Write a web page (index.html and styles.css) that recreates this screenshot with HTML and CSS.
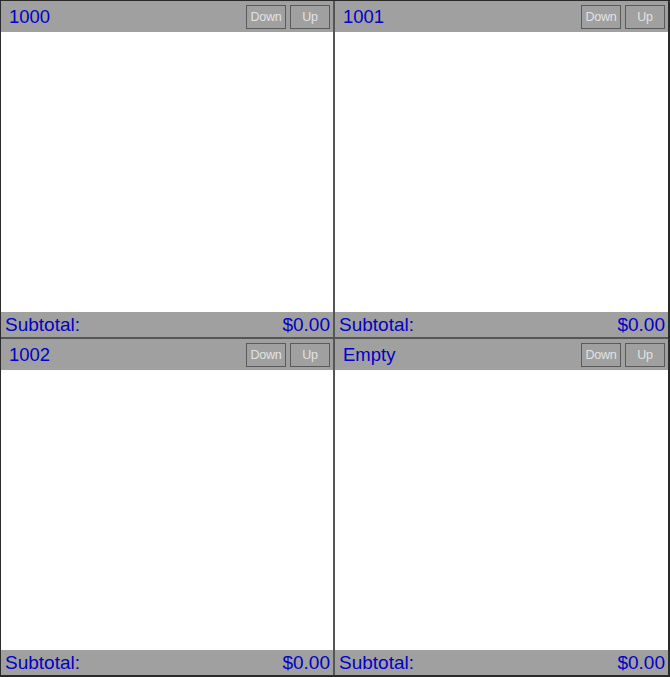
FILE: index.html
```html
<!DOCTYPE html>
<html>
<head>
<meta charset="utf-8">
<link rel="stylesheet" href="styles.css">
</head>
<body>
<div class="board">
  <div class="ticket">
    <div class="head"><span class="title">1000</span><div class="btns"><button class="btn">Down</button><button class="btn">Up</button></div></div>
    <div class="body"></div>
    <div class="foot"><span>Subtotal:</span><span>$0.00</span></div>
  </div>
  <div class="ticket">
    <div class="head"><span class="title">1001</span><div class="btns"><button class="btn">Down</button><button class="btn">Up</button></div></div>
    <div class="body"></div>
    <div class="foot"><span>Subtotal:</span><span>$0.00</span></div>
  </div>
  <div class="ticket">
    <div class="head"><span class="title">1002</span><div class="btns"><button class="btn">Down</button><button class="btn">Up</button></div></div>
    <div class="body"></div>
    <div class="foot"><span>Subtotal:</span><span>$0.00</span></div>
  </div>
  <div class="ticket">
    <div class="head"><span class="title">Empty</span><div class="btns"><button class="btn">Down</button><button class="btn">Up</button></div></div>
    <div class="body"></div>
    <div class="foot"><span>Subtotal:</span><span>$0.00</span></div>
  </div>
</div>
</body>
</html>
```
FILE: styles.css
```css
html, body {
  margin: 0;
  padding: 0;
  background: #ffffff;
}
body {
  font-family: "Liberation Sans", Arial, sans-serif;
  width: 670px;
  height: 677px;
}
.board {
  box-sizing: border-box;
  width: 670px;
  height: 677px;
  display: grid;
  grid-template-columns: 332px 333px;
  grid-template-rows: 336px 336px;
  column-gap: 2px;
  row-gap: 2px;
  background: #555555;
  border-style: solid;
  border-color: #2a2a2a;
  border-width: 1px 2px 2px 1px;
}
.ticket {
  display: flex;
  flex-direction: column;
  background: #ffffff;
  min-height: 0;
}
.head {
  height: 31px;
  flex: none;
  background: #a0a0a0;
  display: flex;
  align-items: center;
  justify-content: space-between;
  padding: 0 3px 0 8px;
}
.title {
  color: #0000c8;
  font-size: 18.5px;
}
.btns {
  display: flex;
  gap: 4px;
  padding-top: 1px;
}
.btn {
  box-sizing: border-box;
  width: 40px;
  height: 24px;
  margin: 0;
  padding: 0;
  background: #a0a0a0;
  border: 1.5px solid #5a5a5a;
  color: #e2e2e2;
  font-family: "Liberation Sans", Arial, sans-serif;
  font-size: 12.5px;
  letter-spacing: -0.3px;
}
.body {
  flex: 1;
}
.foot {
  height: 25px;
  flex: none;
  background: #a0a0a0;
  display: flex;
  align-items: center;
  justify-content: space-between;
  padding: 0 3px 0 4px;
  color: #0000c8;
  font-size: 19px;
}
```
